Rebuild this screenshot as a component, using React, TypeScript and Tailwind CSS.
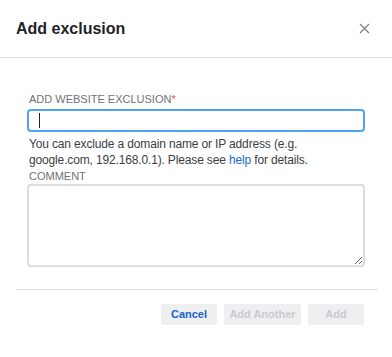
export default function App() {
  return (
    <div className="h-[357px] w-[392px] bg-white font-['Liberation_Sans',Arial,sans-serif] text-[#1f2328]">
      <div className="flex h-[58px] items-center justify-between border-b border-[#dcdcdf] pl-4 pr-[22px]">
        <h2 className="text-[16px] font-bold leading-none">Add exclusion</h2>
        <svg width="11" height="11" viewBox="0 0 11 11" className="text-[#7a7d83]">
          <path d="M1 1L10 10M10 1L1 10" stroke="currentColor" strokeWidth="1.2" />
        </svg>
      </div>
      <div className="px-[27px] pt-[34px]">
        <label className="block pl-[2px] text-[11px] uppercase leading-[14px] text-[#6f7278]">
          Add website exclusion<span className="text-[#e8542e]">*</span>
        </label>
        <div className="mt-[3px] flex h-[23px] items-center rounded-[4px] border-2 border-[#4da3f3] px-[10px]">
          <span className="h-[15px] w-px bg-[#222]" />
        </div>
        <p className="mt-[4px] max-w-[300px] pl-[2px] text-[12px] leading-[16px] tracking-[-0.15px] text-[#3b3e44]">
          You can exclude a domain name or IP address (e.g. google.com, 192.168.0.1). Please see{" "}
          <a className="text-[#1769d3]">help</a> for details.
        </p>
        <label className="mt-[2px] block pl-[2px] text-[11px] uppercase leading-[13px] text-[#6f7278]">Comment</label>
        <textarea className="mt-[1px] block h-[83px] w-full resize-y rounded-[4px] border-2 border-[#dcdde2] outline-none" />
      </div>
      <div className="ml-4 mr-[14px] mt-[22px] border-t border-[#dcdcdf]" />
      <div className="flex justify-end gap-[7px] pr-[28px] pt-[14px]">
        <button className="h-[21px] w-[56px] rounded-[3px] bg-[#eeeff1] text-[11px] font-bold text-[#1a63c9]">Cancel</button>
        <button className="h-[21px] w-[77px] rounded-[3px] bg-[#eeeff1] text-[11px] font-bold text-[#c9cbcf]">Add Another</button>
        <button className="h-[21px] w-[56px] rounded-[3px] bg-[#eeeff1] text-[11px] font-bold text-[#c9cbcf]">Add</button>
      </div>
    </div>
  );
}
